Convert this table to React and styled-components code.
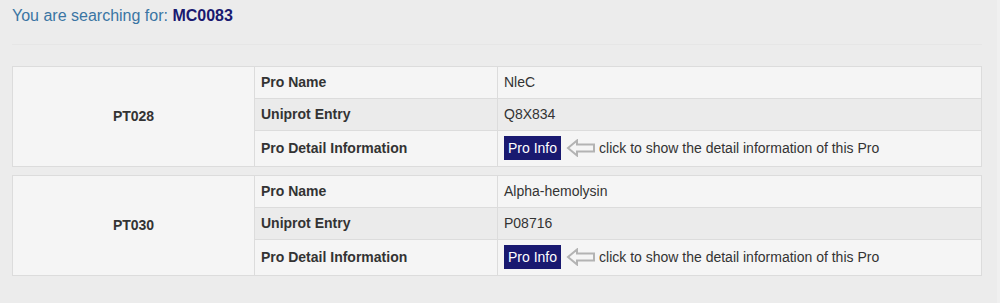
import React from "react";
import styled, { createGlobalStyle } from "styled-components";

const Global = createGlobalStyle`
  html, body { margin: 0; padding: 0; background: #ececec; }
  body { font-family: "Liberation Sans", Arial, sans-serif; font-size: 14px; color: #333; }
`;

const Page = styled.div`
  display: flex;
  width: 1000px;
  min-height: 303px;
`;

const Main = styled.div`
  width: 997px;
  padding: 0 15px 0 12px;
  box-sizing: border-box;
`;

const Side = styled.div`
  flex: 1;
  background: #f0f0f0;
`;

const Title = styled.h4`
  margin: 0;
  padding-top: 6px;
  font-size: 16px;
  font-weight: normal;
  line-height: 20px;
  color: #3a75a3;
`;

const Query = styled.b`
  color: #191970;
`;

const Rule = styled.hr`
  margin: 18px 0 0 0;
  border: 0;
  border-top: 1px solid #e6e6e6;
  width: 970px;
`;

const List = styled.div`
  display: flex;
  flex-direction: column;
  gap: 8px;
  padding-top: 21px;
`;

const Table = styled.table`
  width: 970px;
  border-collapse: collapse;
  border: 1px solid #dcdcdc;
  table-layout: fixed;
`;

const Row = styled.tr`
  background: ${(p) => (p.$striped ? "#ebebeb" : "#f5f5f5")};
`;

const Cell = styled.td`
  border: 1px solid #dcdcdc;
  padding: 5px 6px 6px 6px;
  line-height: 20px;
  vertical-align: middle;
  font-weight: ${(p) => (p.$bold ? "bold" : "normal")};
  text-align: ${(p) => (p.$center ? "center" : "left")};
  background: ${(p) => (p.$plain ? "#f5f5f5" : "inherit")};
`;

const ProButton = styled.span`
  display: inline-block;
  background: #191970;
  color: #fff;
  padding: 2px 4px;
  line-height: 20px;
  vertical-align: middle;
`;

const Hint = styled.span`
  display: inline-flex;
  align-items: center;
  gap: 3px;
  margin-left: 5px;
  vertical-align: middle;
`;

const Arrow = () => (
  <svg width="30" height="18" viewBox="0 0 30 18">
    <path
      d="M2 9 L11 1.5 L11 5.5 L28 5.5 L28 12.5 L11 12.5 L11 16.5 Z"
      fill="none"
      stroke="#b3b3b3"
      strokeWidth="2"
      strokeLinejoin="miter"
    />
  </svg>
);

const data = [
  { id: "PT028", name: "NleC", entry: "Q8X834" },
  { id: "PT030", name: "Alpha-hemolysin", entry: "P08716" },
];

export default function App() {
  return (
    <Page>
      <Global />
      <Main>
        <Title>
          You are searching for: <Query>MC0083</Query>
        </Title>
        <Rule />
        <List>
          {data.map((d) => (
            <Table key={d.id}>
              <colgroup>
                <col style={{ width: 242 }} />
                <col style={{ width: 243 }} />
                <col />
              </colgroup>
              <tbody>
                <Row>
                  <Cell rowSpan={3} $bold $center $plain>
                    {d.id}
                  </Cell>
                  <Cell $bold>Pro Name</Cell>
                  <Cell>{d.name}</Cell>
                </Row>
                <Row $striped>
                  <Cell $bold>Uniprot Entry</Cell>
                  <Cell>{d.entry}</Cell>
                </Row>
                <Row>
                  <Cell $bold>Pro Detail Information</Cell>
                  <Cell>
                    <ProButton>Pro Info</ProButton>
                    <Hint>
                      <Arrow />
                      click to show the detail information of this Pro
                    </Hint>
                  </Cell>
                </Row>
              </tbody>
            </Table>
          ))}
        </List>
      </Main>
      <Side />
    </Page>
  );
}
